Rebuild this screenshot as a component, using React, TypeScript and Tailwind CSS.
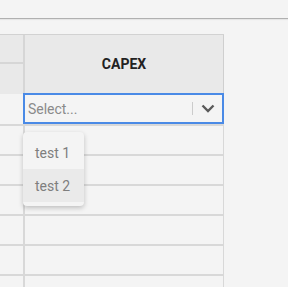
import React from 'react';

const rows = [1, 2, 3, 4, 5, 6];

const App: React.FC = () => {
  return (
    <div className="w-[288px] h-[287px] overflow-hidden bg-[#f4f4f4] font-['Roboto',sans-serif]">
      {/* top bar */}
      <div className="h-[19px] border-b border-[#b0b0b0] shadow-[0_1px_1px_rgba(0,0,0,0.06)]" />

      <div className="mt-[15px] w-[224px]">
        {/* header */}
        <div className="flex h-[60px] border-t border-[#d2d2d2] bg-[#e9e9e9]">
          <div className="flex w-[25px] flex-col border-r-2 border-[#d6d6d6]">
            <div className="h-[29px] border-b-2 border-[#d6d6d6]" />
            <div className="flex-1" />
          </div>
          <div className="flex w-[199px] items-center justify-center border-r border-[#cfcfcf] pb-px text-sm font-bold text-[#222]">
            CAPEX
          </div>
        </div>

        {/* row with select */}
        <div className="relative flex h-[32px] border-b-2 border-[#d8d8d8]">
          <div className="w-[23px]" />
          <div className="relative z-10 -mt-px flex h-[31px] w-[202px] items-center border-2 border-[#4a8ae6] bg-[#f4f4f4]">
            <span className="flex-1 pl-[3px] text-sm text-[#8a8a8a]">Select...</span>
            <span className="h-[13px] w-px bg-[#cccccc]" />
            <span className="flex w-[29px] items-center justify-center">
              <svg width="14" height="9" viewBox="0 0 14 9" fill="none">
                <path d="M1.5 1.5 L7 7 L12.5 1.5" stroke="#5a5a5a" strokeWidth="2.4" />
              </svg>
            </span>
          </div>

          {/* dropdown menu */}
          <div className="absolute left-[23px] top-[38px] z-20 w-[61px] rounded-[4px] bg-[#f4f4f4] py-1 shadow-[0_2px_5px_rgba(0,0,0,0.22)]">
            <div className="flex h-[33px] items-center pl-3 text-sm text-[#7e7e7e]">test 1</div>
            <div className="flex h-[33px] items-center bg-[#eaeaea] pl-3 text-sm text-[#7e7e7e]">test 2</div>
          </div>
        </div>

        {/* body rows */}
        {rows.map((r) => (
          <div key={r} className="flex h-[30px] border-b-2 border-[#d8d8d8]">
            <div className="w-[25px] border-r-2 border-[#d8d8d8]" />
            <div className="w-[199px] border-r border-[#d8d8d8]" />
          </div>
        ))}
      </div>
    </div>
  );
};

export default App;
